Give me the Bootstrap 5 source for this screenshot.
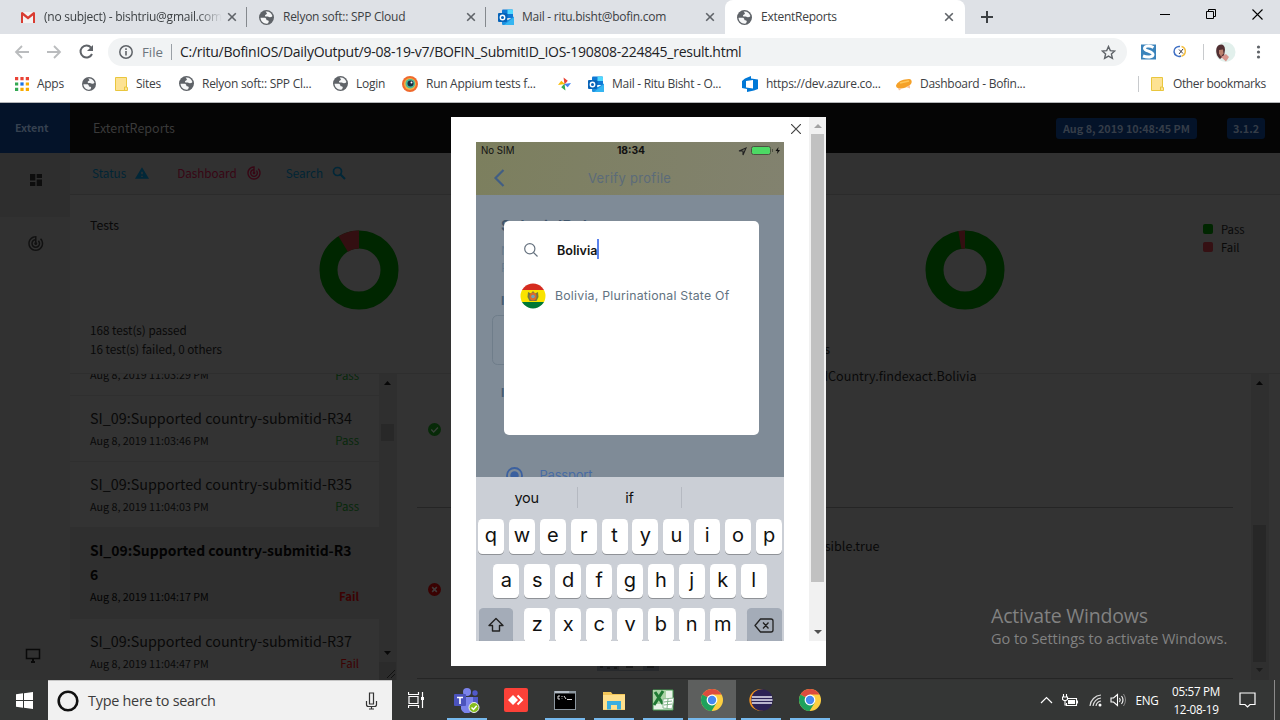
<!DOCTYPE html>
<html lang="en">
<head>
<meta charset="utf-8">
<title>ExtentReports</title>
<link rel="stylesheet" href="https://cdn.jsdelivr.net/npm/bootstrap@5.3.0/dist/css/bootstrap.min.css">
<style>
body{width:1280px;height:720px;overflow:hidden;font-family:"Open Sans","Noto Sans",sans-serif;font-size:12px;line-height:16px;color:#3c4043;background:#333}
svg{display:block;flex:none}
.desk{height:720px}
/* browser chrome */
.tabstrip{height:34px;background:#dee1e6;padding-left:8px}
.tab{width:239px;padding-left:12px;position:relative}
.tab .cap{width:179px;margin-left:8px;overflow:hidden;white-space:nowrap;letter-spacing:-.26px}
.tab .globe+.cap{margin-left:9px}
.tab.sep{border-right:1px solid #85898e;height:20px}
.tab .fade-cap{-webkit-mask-image:linear-gradient(90deg,#000 86%,transparent);mask-image:linear-gradient(90deg,#000 86%,transparent);width:178px;margin-right:1px}
.tab.cur{width:240px;height:34px;background:#fff;border-radius:8px 8px 0 0}
.winbtns{width:120px;height:28px;padding-right:17px}
.toolbar{height:36px;background:#fff;padding-left:14px}
.omni{width:1019px;height:28px;border-radius:14px;background:#f1f3f4;font-size:13.3px;padding:0 11px}
.omni .scheme{margin:0 8px 0 9px}
.omni .url{color:#202124;font-size:14px;letter-spacing:-.27px}
.omni .vr{height:16px;background:#9aa0a6;opacity:1;align-self:center}
.marks{height:33px;background:#fff;border-bottom:1px solid #b4b6b9;padding:0 0 5px 15px;letter-spacing:-.28px}
.marklist{display:grid;grid-template-columns:67px 33px 64px 154px 69px 156px 30px 154px 154px 160px;align-items:center}
.marklist>div,.other{display:flex;align-items:center;gap:8px;white-space:nowrap}
.other{width:129px;gap:9px;letter-spacing:-.38px}
/* report */
.report{height:577px;font-family:"Noto Sans CJK SC","Noto Sans CJK JP",sans-serif;color:#090909;position:relative;overflow:hidden}
.topbar{height:50px;background:#050505;color:#3a3a3a}
.brandbox{width:70px;height:50px;padding-left:15px;background:#041329;color:#364150;font-weight:700;font-size:10.7px}
.rname{font-size:12.5px;margin-left:23px}
.pill{background:#041329;color:#353d48;font-weight:700;border-radius:3px;height:21px;font-size:10.8px;line-height:21px;width:141px;text-align:center}
.pill.ver{width:38px;margin:0 15px 0 30px}
.rail{width:70px;height:527px;background:#313131;flex:none}
.rail .on{height:64px;background:#2e2e2e;padding:21px 0 0 2px}
.subnav{height:42px;background:#313131;border-bottom:1px solid #2b2b2b;padding:0 0 1px 22px;color:#012535;font-size:11.7px}
.subnav svg{margin:0 28px 0 9px}
.subnav .now{color:#380614}
.dash{height:179px;border-bottom:1px solid #2e2e2e;font-size:11.7px}
.dash .half{width:605px;flex:none;height:178px;position:relative}
.dash h6{font-size:12.3px;line-height:18px;font-weight:400;margin:0;padding:21px 0 0 20px}
.dash .donut{margin:-4px 0 0 249px}
.dash .half+.half .donut{margin-left:250px}
.tally{padding-left:20px;line-height:19px;margin-top:10px}
.legend{position:absolute;left:528px;top:25px;line-height:18px;width:60px;font-size:11.3px}
.sw{width:10px;height:10px;border-radius:2px}
.tests{width:309px}
.test{height:66px;border-bottom:1px solid #2f2f2f;padding:10px 20px 0;background:#333;overflow:hidden}
.test.cut{height:22px;padding:0 20px 11px}
.test.sel{height:91px;background:#2f2f2f;font-weight:700;color:#030303}
.test .ttl{font-size:14.35px;line-height:24px;margin-bottom:1px}
.test.sel .ttl{font-size:13.95px}
.test .when{font-size:10.75px;line-height:18px;font-weight:400;padding-top:1px}
.test .st{font-size:11.4px;line-height:18px}
.pass{color:#08280b}.fail{color:#3c0202}
.sbar{width:18px;background:#2f2f2f;flex:none}
.steps{width:854px;padding-left:20px}
.step{width:816px;border-bottom:1px solid #252525;font-size:12.6px;padding-left:10.5px}
.step .ico-pass{margin-top:49px}
.s1{margin-left:306px;width:230px;text-align:right;line-height:18px;margin-top:-7px}
.s2{margin-left:239px;width:200px;text-align:right;margin-top:-86px}
/* dialog */
.viewer{position:absolute;left:451px;top:14px;width:375px;height:549px;background:#fff}
.viewer .shut{height:25px;width:358px;padding:0 8px 2px 0}
.phone{width:308px;height:499px;margin-left:25px;font-family:Inter,Roboto,sans-serif;color:#111}
.phead{height:53px;background:linear-gradient(100deg,#7c7f5e,#82826f)}
.stat{height:17px;font-size:9.7px;line-height:17px;padding:0 3px 0 5px}
.stat span,.stat svg{width:43px}
.stat b{font-size:10.3px}
.nav2{height:36px;padding:2px 0 0 17px;color:#5b6b79;font-size:13px;letter-spacing:.3px}
.vp{margin-left:83px}
.pbody{height:282px;background:#7f8b97;position:relative;overflow:hidden;color:#445a70}
.picker{position:absolute;left:28px;top:26px;width:255px;height:214px;border-radius:5px;background:#fff;padding:20px 16px}
.q{font-size:12.6px;font-weight:600;color:#151515;margin-left:19px;line-height:17px;border-right:2px solid #5b82ec;padding:3px 0 0;height:20px;margin-top:-2px}
.ctry{margin-top:24px;gap:9px;color:#637381;font-size:12.3px;letter-spacing:.22px}
.keys{height:164px;background:#cbcfd6;overflow:hidden;color:#111}
.hint{height:42px;font-size:14.5px;letter-spacing:-.2px;padding-bottom:1px}
.hint span{width:102px;height:21px;line-height:21px;text-align:center}
.hint span+span{border-left:1px solid #b5b9c1;width:104px}
.krow{height:34.5px;margin-bottom:10px;gap:4.9px;font-size:20px;line-height:33px}
.k{width:26px;height:34.5px;border-radius:4.5px;background:#fff;text-align:center;box-shadow:0 1px 0 #8f9297}
.k.wide{width:34.5px;background:#a4acb8;display:flex;align-items:center;justify-content:center}
.k.shift{margin:0 auto 0 2.5px}.k.del{margin:0 2.5px 0 auto}
.vbar{position:absolute;right:0;top:0;width:17px;height:524px;background:#f1f1f1}
.vbar .th{width:13px;height:448px;background:#c1c1c1}
.peek{position:absolute;left:597px;top:563px}
.wm{position:absolute;left:991px;top:500px;font-family:"Open Sans",sans-serif;color:#828282;white-space:nowrap}
.wm .a{font-size:19.5px;line-height:25px;letter-spacing:-.2px}
.wm .b{font-size:14.5px;line-height:20px;letter-spacing:-.04px;margin-top:1px}
/* taskbar */
.tasks{height:40px;background:#343635;color:#fff}
.find{width:344px;height:40px;background:#f1f1f1;border-top:1px solid #c5c5c5;color:#3b3b3b;font-size:14.4px;letter-spacing:-.25px;padding:0 13px 0 8px}
.app{width:48px;height:40px;display:flex;align-items:center;justify-content:center}
.applist{gap:1px;margin-left:-1px}
.app.run{background:linear-gradient(#76b9ed,#76b9ed) center bottom/40px 2px no-repeat}
.app.act{background:linear-gradient(#76b9ed,#76b9ed) center bottom/48px 2px no-repeat #5d5f5e}
.tray{display:grid;grid-template-columns:24px 25px 24px 22px 36px 62px 40px 16px;justify-items:center;align-items:center;margin-left:auto;width:246px;font-size:11.7px;letter-spacing:-.3px}
.clock{line-height:18px;white-space:nowrap}
</style>
<script src="https://cdn.jsdelivr.net/npm/bootstrap@5.3.0/dist/js/bootstrap.bundle.min.js"></script>
</head>
<body>
<svg width="0" height="0" class="position-absolute">
 <symbol id="globe" viewBox="0 0 14 14"><circle cx="7" cy="7" r="7" fill="#5f6368"/><path d="M1.400 7.200h3.400c1.400 0 2 .6 2 1.500s.7 1 1.600 1c.7 0 .8.8.6 1.500l-.7 1.400C4.900 13.300 1.700 10.900 1.400 7.200z" fill="#f6f7f8"/><path d="M6.200 1.500c3-.5 5.600 1.300 6.300 4.200-.7 1.100-2 1.300-3 .9-1.200-.5-2.200-.2-3.200-.5-1.100-.4-.8-1.700.2-2 .8-.2 1.200-.7.700-1.300z" fill="#f6f7f8"/></symbol>
 <symbol id="x" viewBox="0 0 10 10"><path d="M1.200 1.200l7.600 7.600M8.800 1.200L1.200 8.800" stroke="#5f6368" stroke-width="1.600"/></symbol>
 <symbol id="outlook" viewBox="0 0 16 16"><path d="M4 1.500A1 1 0 0 1 5 .5h9a1 1 0 0 1 1 1V9H4z" fill="#0f78d4"/><path d="M9.500.5H14a1 1 0 0 1 1 1V5H9.500z" fill="#50d9ff"/><path d="M4 5h5.500v4.500H4z" fill="#0a5cad"/><path d="M4 8l6 3 6-3.500V15a1 1 0 0 1-1 1H5a1 1 0 0 1-1-1z" fill="#1a8fe0"/><path d="M16 8v7a1 1 0 0 1-1 1H6z" fill="#35b5f1"/><rect y="4" width="9" height="9" rx="1" fill="#0763b8"/><circle cx="4.500" cy="8.500" r="2.200" fill="none" stroke="#fff" stroke-width="1.400"/></symbol>
 <symbol id="folder" viewBox="0 0 13 14"><path d="M.5.500h11v10h1v3h-12z" fill="#fde293" stroke="#e9c63e"/><path d="M9.500 13v-3h2" fill="none" stroke="#e9c63e"/></symbol>
 <symbol id="chrome" viewBox="0 0 22 22"><circle cx="11" cy="11" r="11" fill="#fdcf41"/><path d="M11 11L1.470 5.500A11 11 0 0 1 20.530 5.500H11z" fill="#dd4b3e"/><path d="M1.470 5.500A11 11 0 0 0 10.600 22L15.800 13.500 11 11z" fill="#1fa15d"/><circle cx="11" cy="11" r="5.400" fill="#fff"/><circle cx="11" cy="11" r="4.200" fill="#4688f1"/></symbol>
 <symbol id="track" viewBox="0 0 24 24"><path d="M19.070 4.930l-1.410 1.410C19.100 7.790 20 9.790 20 12c0 4.420-3.580 8-8 8s-8-3.580-8-8c0-4.080 3.050-7.440 7-7.930v2.020C8.160 6.570 6 9.030 6 12c0 3.310 2.690 6 6 6s6-2.690 6-6c0-1.660-.67-3.160-1.760-4.240l-1.410 1.410C15.550 9.900 16 10.900 16 12c0 2.210-1.790 4-4 4s-4-1.790-4-4c0-1.860 1.280-3.410 3-3.860v2.140c-.6.350-1 .98-1 1.720 0 1.100.9 2 2 2s2-.9 2-2c0-.740-.4-1.380-1-1.720V2h-1C6.480 2 2 6.480 2 12s4.480 10 10 10 10-4.480 10-10c0-2.760-1.120-5.260-2.930-7.070z" fill="currentColor"/></symbol>
</svg>
<div class="desk d-flex flex-column">
 <header>
  <div class="tabstrip d-flex align-items-center">
   <div class="tab sep d-flex align-items-center"><svg width="16" height="13" viewBox="0 0 16 13"><path d="M1 1h14v11H1z" fill="#f2f2f2"/><path d="M1 1.500V12h2V4.500l5 4 5-4V12h2V1.500L13.500 1 8 5.500 2.500 1z" fill="#d93c32"/></svg><span class="cap fade-cap">(no subject) - bishtriu@gmail.com</span><svg class="ms-1" width="10" height="10"><use href="#x"/></svg></div>
   <div class="tab sep d-flex align-items-center"><svg class="globe" width="15" height="15"><use href="#globe"/></svg><span class="cap">Relyon soft:: SPP Cloud</span><svg class="ms-1" width="10" height="10"><use href="#x"/></svg></div>
   <div class="tab d-flex align-items-center"><svg width="16" height="16"><use href="#outlook"/></svg><span class="cap">Mail - ritu.bisht@bofin.com</span><svg class="ms-1" width="10" height="10"><use href="#x"/></svg></div>
   <div class="tab cur d-flex align-items-center"><svg class="globe" width="15" height="15"><use href="#globe"/></svg><span class="cap">ExtentReports</span><svg class="ms-1" width="10" height="10"><use href="#x"/></svg></div>
   <svg class="ms-3" width="12" height="12" viewBox="0 0 12 12"><path d="M6 0v12M0 6h12" stroke="#3c4043" stroke-width="2"/></svg>
   <div class="winbtns d-flex ms-auto justify-content-between align-items-center align-self-start"><svg width="10" height="10"><path d="M0 5.500h10" stroke="#000"/></svg><svg width="11" height="11"><path d="M.5 2.500h7v7h-7zM2.500 2.500v-2h7v7h-2" fill="none" stroke="#000"/></svg><svg width="11" height="11"><path d="M.5.500l10 10M10.500.500l-10 10" stroke="#000" stroke-width="1.100"/></svg></div>
  </div>
  <div class="toolbar d-flex align-items-center">
   <svg width="94" height="16" viewBox="0 0 94 16"><path d="M15 8H2M8 2L2 8l6 6M33 8h13M40 2l6 6-6 6" fill="none" stroke="#babcbe" stroke-width="1.800"/><path d="M77 3.500A6 6 0 1 0 78 10" fill="none" stroke="#5f6368" stroke-width="2"/><path d="M79 1v6h-6z" fill="#5f6368"/></svg>
   <div class="omni d-flex align-items-center"><svg width="14" height="14" viewBox="0 0 14 14"><circle cx="7" cy="7" r="6.200" fill="none" stroke="#5f6368" stroke-width="1.500"/><path d="M7 6v4.500M7 3.300v1.600" stroke="#5f6368" stroke-width="1.600"/></svg><span class="scheme text-secondary">File</span><span class="vr"></span><span class="url ms-2">C:/ritu/BofinIOS/DailyOutput/9-08-19-v7/BOFIN_SubmitID_IOS-190808-224845_result.html</span>
    <svg class="ms-auto" width="15" height="15" viewBox="0 0 15 15"><path d="M7.500 1.500l1.800 4.100 4.400.4-3.300 3 1 4.400-3.900-2.300-3.900 2.300 1-4.400L1.300 6l4.400-.4z" fill="none" stroke="#5f6368" stroke-width="1.400"/></svg></div>
   <svg class="ms-auto" width="139" height="20" viewBox="0 0 139 20"><path d="M0 2.500h15v15H0z" fill="#3a83bb"/><path d="M12.500 5.500C8 3 3.500 4 3.500 6.500S12 9.500 12 12.500 6 15.500 2 14" fill="none" stroke="#fff" stroke-width="3"/><path d="M39 4.500a5 5 0 1 0 1 9.500" fill="none" stroke="#3e6fc4" stroke-width="1.500"/><path d="M40.500 4.500a5 5 0 0 1 0 9.700" fill="none" stroke="#f3bd3c" stroke-width="1.500"/><path d="M38 7.500l4 4M42 7l-4 5" stroke="#334"/><path d="M62.500 2v16" stroke="#c8cacd"/><circle cx="84.500" cy="10" r="10" fill="#e2f0ec"/><path d="M76 5c3-4 8-3 8 3l-1 6-4 3c-3-2-5-8-3-12z" fill="#512f32"/><path d="M78 8l4-.5.500 4-2.500 3-2-3z" fill="#bb806d"/><path d="M80 15l5-3 3 3-3 4.500z" fill="#d8958c"/><g fill="#5f6368"><circle cx="117.500" cy="5" r="1.600"/><circle cx="117.500" cy="10" r="1.600"/><circle cx="117.500" cy="15" r="1.600"/></g></svg>
  </div>
  <div class="marks d-flex align-items-center">
   <div class="marklist">
    <div><svg width="14" height="14" viewBox="0 0 13 13"><g fill="#ea4335"><path d="M0 0h3v3H0zM5 0h3v3H5zM10 0h3v3h-3z"/></g><path d="M0 5h3v3H0zM0 10h3v3H0z" fill="#34a853"/><path d="M5 5h3v3H5z" fill="#1a73e8"/><path d="M10 5h3v3h-3zM5 10h3v3H5zM10 10h3v3h-3z" fill="#f9ab00"/></svg><span>Apps</span></div>
    <div><svg width="14" height="14"><use href="#globe"/></svg></div>
    <div><svg width="13" height="14"><use href="#folder"/></svg>Sites</div>
    <div><svg width="15" height="15"><use href="#globe"/></svg>Relyon soft:: SPP Cl...</div>
    <div><svg width="15" height="15"><use href="#globe"/></svg>Login</div>
    <div><svg width="16" height="16" viewBox="0 0 16 16"><circle cx="8" cy="8" r="8" fill="#ef6a2d"/><circle cx="8" cy="8" r="6" fill="#f4b042"/><circle cx="8.300" cy="7.700" r="4.800" fill="#49b89a"/><circle cx="8.500" cy="7.500" r="3" fill="#172d42"/><circle cx="9.500" cy="6.500" r="1" fill="#fff"/></svg>Run Appium tests f...</div>
    <div><svg width="13" height="14" viewBox="0 0 14 14"><path d="M7 7.500L6 0l4.500 3.500z" fill="#e94335"/><path d="M6.500 7l7.500-1-3.500 4.500z" fill="#4285f4"/><path d="M7 6.500L8 14l-4.500-3.500z" fill="#34a853"/><path d="M7.500 7L0 8l3.500-4.500z" fill="#fbbc05"/></svg></div>
    <div><svg width="16" height="16"><use href="#outlook"/></svg>Mail - Ritu Bisht - O...</div>
    <div><svg width="16" height="16" viewBox="0 0 16 16"><path d="M0 5l3-2.500L9 0v2.500l7 1V13l-4 1.500-7 1.500V13L0 12zM4 5v6.500l7 1V4z" fill="#0078d7" fill-rule="evenodd"/></svg>https://dev.azure.co...</div>
    <div><svg width="16" height="14" viewBox="0 0 16 14"><path d="M0 8.500C1 5.500 5 3 9 2.500l4-.5c3 0 3.500 3.500 1.500 5.500-3 3-8 4.500-11.500 4C1 11.200 0 10 0 8.500z" fill="#f5a128"/><path d="M2 11l1 2.500 3-2zM10 10l4 1.500V8z" fill="#f9c39a"/><path d="M4 6l9-2" stroke="#ffc65a" stroke-width="1.500"/></svg>Dashboard - Bofin...</div>
   </div>
   <svg class="ms-auto me-2" width="5" height="16"><path d="M.5 0v16" stroke="#c8cacd"/></svg>
   <div class="other"><svg width="13" height="14"><use href="#folder"/></svg>Other bookmarks</div>
  </div>
 </header>

 <main class="report">
  <div class="topbar d-flex align-items-center">
   <div class="brandbox d-flex align-items-center">Extent</div>
   <span class="rname">ExtentReports</span>
   <span class="pill ms-auto">Aug 8, 2019 10:48:45 PM</span>
   <span class="pill ver">3.1.2</span>
  </div>
  <div class="d-flex">
   <nav class="rail d-flex flex-column">
    <div class="on d-flex justify-content-center"><svg width="12" height="12" viewBox="0 0 12 12"><path d="M0 0h5.300v6.500H0zM0 8h5.300v4H0zM6.700 0H12v4H6.700zM6.700 5.500H12V12H6.700z" fill="#0d0d0d"/></svg></div>
    <svg class="mx-auto mt-3" width="18" height="21" viewBox="-3 0 24 24" color="#111"><use href="#track" width="24" height="24" x="-2"/></svg>
    <svg class="mt-auto mb-3" width="66" height="16" viewBox="0 0 66 16"><path d="M26.500 1.500h13v9h-13z" fill="none" stroke="#090909" stroke-width="1.500"/><path d="M31 14h4M33 11v3" stroke="#090909" stroke-width="2"/></svg>
   </nav>
   <section class="flex-grow-1">
    <div class="subnav d-flex align-items-center">
     <span>Status</span><svg width="14" height="12" viewBox="0 0 16 13"><path d="M8 0l8 13H0z" fill="#012738"/><path d="M8 5v3M8 9.500V11" stroke="#333" stroke-width="1.500"/></svg>
     <span class="now">Dashboard</span><svg width="16" height="16" class="now me-4"><use href="#track"/></svg>
     <span>Search</span><svg width="14" height="14" viewBox="0 0 14 14"><circle cx="5.500" cy="5.500" r="4" fill="none" stroke="#012738" stroke-width="1.700"/><path d="M8.500 8.500l4.500 4.500" stroke="#012738" stroke-width="2"/></svg>
    </div>
    <div class="dash d-flex">
     <div class="half"><h6>Tests</h6><svg class="donut" width="80" height="80" viewBox="0 0 80 80"><circle cx="40" cy="40" r="30.500" fill="none" stroke="#002600" stroke-width="18"/><circle cx="40" cy="40" r="30.500" fill="none" stroke="#330f11" stroke-width="18" pathLength="184" stroke-dasharray="16 168" stroke-dashoffset="16" transform="rotate(-90 40 40)"/></svg><div class="tally"><div>168 test(s) passed</div><div>16 test(s) failed, 0 others</div></div></div>
     <div class="half"><h6>Steps</h6><svg class="donut" width="80" height="80" viewBox="0 0 80 80"><circle cx="40" cy="40" r="30.500" fill="none" stroke="#002600" stroke-width="18"/><circle cx="40" cy="40" r="30.500" fill="none" stroke="#330f11" stroke-width="18" pathLength="184" stroke-dasharray="5 179" stroke-dashoffset="5" transform="rotate(-90 40 40)"/></svg><div class="tally"><div>&nbsp;</div><div>17 step(s) failed, 0 others</div></div>
      <div class="legend"><div class="d-flex align-items-center gap-2"><span class="sw" style="background:#002600"></span>Pass</div><div class="d-flex align-items-center gap-2"><span class="sw" style="background:#351013"></span>Fail</div></div></div>
    </div>
    <div class="d-flex" style="height:306px">
     <div class="tests overflow-hidden flex-shrink-0">
      <div class="test cut d-flex justify-content-between align-items-end"><span class="when">Aug 8, 2019 11:03:29 PM</span><span class="st pass">Pass</span></div>
      <div class="test"><div class="ttl">SI_09:Supported country-submitid-R34</div><div class="d-flex justify-content-between"><span class="when">Aug 8, 2019 11:03:46 PM</span><span class="st pass">Pass</span></div></div>
      <div class="test"><div class="ttl">SI_09:Supported country-submitid-R35</div><div class="d-flex justify-content-between"><span class="when">Aug 8, 2019 11:04:03 PM</span><span class="st pass">Pass</span></div></div>
      <div class="test sel"><div class="ttl">SI_09:Supported country-submitid-R3<br>6</div><div class="d-flex justify-content-between"><span class="when">Aug 8, 2019 11:04:17 PM</span><span class="st fail">Fail</span></div></div>
      <div class="test"><div class="ttl">SI_09:Supported country-submitid-R37</div><div class="d-flex justify-content-between"><span class="when">Aug 8, 2019 11:04:47 PM</span><span class="st fail">Fail</span></div></div>
     </div>
     <div class="sbar"><svg width="18" height="306" viewBox="0 0 18 306"><path d="M5 11l3.500-4 3.500 4zM5 277l3.500 4 3.500-4z" fill="#080808"/><path d="M2 50h13v17H2z" fill="#282828"/><path d="M0 288h17v18H0z" fill="#2b2b2b"/><path d="M8 304l8-8M12 304l4-4" stroke="#111"/></svg></div>
     <div class="steps flex-shrink-0">
      <div class="step d-flex align-items-start" style="height:134px"><svg class="ico-pass" width="13" height="13" viewBox="0 0 14 14"><circle cx="7" cy="7" r="7" fill="#072a08"/><path d="M3.500 7l2.600 2.600 4.600-4.800" fill="none" stroke="#3a403a" stroke-width="1.500"/></svg><span class="s1">SupportedCountry.findexact.Bolivia</span></div>
      <div class="step d-flex align-items-center pb-2" style="height:171px"><svg width="13" height="13" viewBox="0 0 14 14"><circle cx="7" cy="7" r="7" fill="#3a0202"/><path d="M4.500 4.500l5 5M9.500 4.500l-5 5" stroke="#403a3a" stroke-width="1.700"/></svg><span class="s2">isVisible.true</span></div>
     </div>
     <div class="sbar"><svg width="17" height="306" viewBox="0 0 17 306"><path d="M5 11l3.500-4 3.500 4z" fill="#080808"/><path d="M5 294l3.500 4 3.500-4z" fill="#1c1c1c"/><path d="M2 151h13v137H2z" fill="#272727"/></svg></div>
    </div>
   </section>
  </div>

  <div class="viewer">
   <div class="shut d-flex align-items-center justify-content-end"><svg width="10" height="10"><path d="M0 0l10 10M10 0L0 10" stroke="#444" stroke-width="1.200"/></svg></div>
   <div class="phone">
    <div class="phead">
     <div class="stat d-flex justify-content-between align-items-center"><span>No SIM</span><b>18:34</b><svg width="43" height="10" viewBox="0 0 43 10"><path d="M1 5l7-3-3 7V5z" fill="none" stroke="#222" stroke-width="1.100"/><rect x="13.500" y=".5" width="19" height="8" rx="2" fill="#4cd964" stroke="#4e5242"/><path d="M34.500 3v3" stroke="#4e5242"/><path d="M40.500 1L37.500 5h2l-.5 3 3-4h-2z" fill="#111"/></svg></div>
     <div class="nav2 d-flex align-items-center"><svg width="12" height="18" viewBox="0 0 12 18"><path d="M10.500 1L2.500 9l8 8" fill="none" stroke="#415e84" stroke-width="2.200"/></svg><span class="vp">Verify profile</span></div>
    </div>
    <div class="pbody">
     <svg width="308" height="282" viewBox="0 0 308 282" font-family="Inter,Roboto,sans-serif"><text x="25" y="36" font-size="14.500" font-weight="700" fill="#40566c" textLength="152">Submit ID document</text><text x="25" y="60" font-size="12" fill="#66798b">N</text><text x="25" y="77" font-size="12" fill="#66798b">P</text><text x="25" y="110" font-size="12" font-weight="700" fill="#455c73">I</text><rect x="16.500" y="120.500" width="60" height="49" rx="5" fill="none" stroke="#6f7d8a"/><text x="25" y="202" font-size="12" font-weight="700" fill="#455c73">I</text><circle cx="38.500" cy="280.500" r="7.500" fill="none" stroke="#3b609f" stroke-width="1.800"/><circle cx="38.500" cy="280.500" r="4.200" fill="#3b609f"/><text x="63.500" y="285" font-size="13" fill="#486ca4" textLength="53">Passport</text></svg>
     <div class="picker"><div class="d-flex align-items-center"><svg class="ms-1" width="14" height="14" viewBox="0 0 14 14"><circle cx="5.800" cy="5.800" r="5.100" fill="none" stroke="#66727f" stroke-width="1.200"/><path d="M9.500 9.500l4 4" stroke="#66727f" stroke-width="1.200"/></svg><span class="q">Bolivia</span></div>
      <div class="ctry d-flex align-items-center"><svg width="26" height="26" viewBox="0 0 26 26"><clipPath id="rnd"><circle cx="13" cy="13" r="12.500"/></clipPath><g clip-path="url(#rnd)"><path d="M0 0h26v7H0z" fill="#d52b1e"/><path d="M0 7h26v12H0z" fill="#f9e300"/><path d="M0 19h26v7H0z" fill="#007934"/></g><path d="M8 9l3 1.500 2-2.500 2 2.500L18 9l.5 5-2 4h-7l-2-4z" fill="#71793f"/><ellipse cx="13" cy="13.500" rx="3.500" ry="4" fill="#da6b2c"/><circle cx="13" cy="13.500" r="1.800" fill="#6ba6bd"/></svg><span>Bolivia, Plurinational State Of</span></div></div>
    </div>
    <div class="keys">
     <div class="hint d-flex align-items-center"><span>you</span><span>if</span><span></span></div>
     <div class="krow d-flex justify-content-center"><div class="k">q</div><div class="k">w</div><div class="k">e</div><div class="k">r</div><div class="k">t</div><div class="k">y</div><div class="k">u</div><div class="k">i</div><div class="k">o</div><div class="k">p</div></div>
     <div class="krow d-flex justify-content-center"><div class="k">a</div><div class="k">s</div><div class="k">d</div><div class="k">f</div><div class="k">g</div><div class="k">h</div><div class="k">j</div><div class="k">k</div><div class="k">l</div></div>
     <div class="krow d-flex justify-content-center"><div class="k wide shift"><svg width="18" height="16" viewBox="0 0 18 16"><path d="M9 1.500l7 7h-3.500V14h-7V8.500H2z" fill="none" stroke="#222" stroke-width="1.400" stroke-linejoin="round"/></svg></div><div class="k">z</div><div class="k">x</div><div class="k">c</div><div class="k">v</div><div class="k">b</div><div class="k">n</div><div class="k">m</div><div class="k wide del"><svg width="20" height="15" viewBox="0 0 20 15"><path d="M6.500 1H17a2 2 0 0 1 2 2v9a2 2 0 0 1-2 2H6.500L1 7.500zM9 4.500l5.500 6M14.500 4.500l-5.500 6" fill="none" stroke="#222" stroke-width="1.300" stroke-linejoin="round"/></svg></div></div>
    </div>
   </div>
   <div class="vbar d-flex flex-column align-items-center"><svg width="8" height="17" viewBox="0 0 8 17"><path d="M0 11l4-4 4 4z" fill="#a3a3a3"/></svg><div class="th"></div><svg class="mt-auto" width="8" height="17" viewBox="0 0 8 17"><path d="M0 6l4 4 4-4z" fill="#505050"/></svg></div>
  </div>
  <svg class="peek" width="62" height="5" viewBox="0 0 62 5"><path d="M0 0h62v5H0z" fill="#26282b"/><path d="M22 0h24v4H22z" fill="#313131"/><path d="M3 1h3M10 2h3M17 2h3M29 1h7M50 1h7" stroke="#151515" stroke-width="1.500"/></svg>
  <div class="wm"><div class="a">Activate Windows</div><div class="b">Go to Settings to activate Windows.</div></div>
 </main>

 <footer class="tasks d-flex align-items-center">
  <div class="app"><svg width="17" height="17" viewBox="0 0 17 17"><path d="M0 2.300l7-1V8H0zM8 1.200L17 0v8H8zM0 9h7v6.700l-7-1zM8 9h9v8l-9-1.200z" fill="#fff"/></svg></div>
  <div class="find d-flex align-items-center"><svg width="24" height="24" viewBox="0 0 24 24"><circle cx="12" cy="12" r="9.300" fill="none" stroke="#111" stroke-width="2.600"/></svg><span class="ms-2">Type here to search</span><svg class="ms-auto" width="14" height="18" viewBox="0 0 14 18"><path d="M4.500 1h4v11h-4zM1.500 9v3.500q0 2 2 2h6q2 0 2-2V9M6.500 14.500V17M4 17h5" fill="none" stroke="#333" stroke-width="1.200"/></svg></div>
  <div class="app me-1"><svg width="17" height="16" viewBox="0 0 17 16"><path d="M.5 0v2.500h10V0M.5 16v-2.500h10V16M1 4.500h9v7H1zM14.500 0v16" fill="none" stroke="#fff" stroke-width="1.200"/><path d="M13 5h3v3h-3z" fill="#fff"/></svg></div>
  <div class="applist d-flex">
   <div class="app run"><svg width="26" height="25" viewBox="0 0 26 25"><circle cx="13" cy="4" r="4" fill="#7b83eb"/><circle cx="21" cy="5" r="2.700" fill="#5059c9"/><path d="M17 9h7v8a5 5 0 0 1-5 5z" fill="#5059c9"/><path d="M7 9h12v8a6 6 0 0 1-12 4z" fill="#7b83eb"/><rect y="6" width="12" height="12" rx="1" fill="#4b53bc"/><path d="M3 9.500h6M6 9.500V16" stroke="#fff" stroke-width="1.600"/><circle cx="20" cy="19.500" r="5" fill="#85bd1e" stroke="#eee"/><path d="M17.500 19.500l2 2 3.200-3.800" fill="none" stroke="#fff" stroke-width="1.500"/></svg></div>
   <div class="app"><svg width="24" height="24" viewBox="0 0 24 24"><rect width="24" height="24" rx="2" fill="#fc4138"/><path d="M9 7l5 5-5 5-5-5z" fill="#fff"/><path d="M13.500 7.500L18 12l-4.500 4.500" fill="none" stroke="#fff" stroke-width="2"/></svg></div>
   <div class="app run"><svg width="22" height="19" viewBox="0 0 22 19"><path d="M0 0h22v19H0z" fill="#8d98a0"/><path d="M1 2.500h20V18H1z" fill="#000"/><path d="M1 1h14" stroke="#dce3ec"/><path d="M6 5H4v3h2M8 5v1M8 7.500V8M10 5l2 3M13 8.500h5" fill="none" stroke="#ddd"/></svg></div>
   <div class="app run"><svg width="22" height="19" viewBox="0 0 22 19"><path d="M0 1h8l1.500 2H22v16H0z" fill="#f3c658"/><path d="M0 4h22v14.500H0z" fill="#ffe08c"/><path d="M4 18.500V10h14v8.500h-4V14H8v4.500z" fill="#3aaee0"/></svg></div>
   <div class="app run"><svg width="22" height="22" viewBox="0 0 22 22"><path d="M1 1h20v20H1z" fill="#e9f4e9" stroke="#459a50"/><path d="M1 1h13v14H1z" fill="#a9d3a5"/><path d="M3 3l8 12M11 2L2 16" stroke="#1f7a33" stroke-width="3"/><path d="M11 10l11-1-2 11-9-1z" fill="#fff" stroke="#89b991"/><path d="M12 13l8-1M12 16l8-1M16 10l-1 9" stroke="#7eb287"/></svg></div>
   <div class="app act"><svg width="22" height="22"><use href="#chrome"/></svg></div>
   <div class="app run"><svg width="24" height="24" viewBox="0 0 24 24"><circle cx="11" cy="12" r="10.700" fill="#f7941e"/><circle cx="13" cy="12" r="10.800" fill="#2c2255"/><path d="M3 9h20M2.500 12h21M3 15h20" stroke="#e8e6f4" stroke-width="1.600"/></svg></div>
   <div class="app run"><svg width="22" height="22"><use href="#chrome"/></svg></div>
  </div>
  <div class="tray"><svg width="13" height="8" viewBox="0 0 13 8"><path d="M1 7l5.500-5.500L12 7" fill="none" stroke="#fff" stroke-width="1.200"/></svg>
   <svg width="17" height="13" viewBox="0 0 17 13"><path d="M5.500 4.500h9v7h-10V9M15.500 6.500v3M1.500 0v3M4.500 0v3M.5 3h5v2.500l-1.500 1H2l-1.500-1zM3 7v4h1.500" fill="none" stroke="#fff" stroke-width="1.100"/><path d="M6 6h7v4H6z" fill="#fff"/></svg>
   <svg width="13" height="14" viewBox="0 0 13 14"><path d="M1 13A12 12 0 0 1 12 2M4 13a9 9 0 0 1 8-8M7 13a6 6 0 0 1 5-5" fill="none" stroke="#ddd" stroke-width="1.200"/><circle cx="11" cy="12" r="1.500" fill="#fff"/></svg>
   <svg width="17" height="14" viewBox="0 0 17 14"><path d="M1 5h2.500l4-3.500v11L3.500 9H1zM9.500 5q1.500 2 0 4M11.500 3q3 4 0 8" fill="none" stroke="#fff" stroke-width="1.100"/><path d="M13.500 1q4 6 0 12" fill="none" stroke="#888"/></svg>
   <span>ENG</span><div class="clock text-center">05:57 PM<br>12-08-19</div>
   <svg width="17" height="16" viewBox="0 0 17 16"><path d="M1 1h15v11.500h-5L8.500 15 6 12.500H1z" fill="none" stroke="#fff" stroke-width="1.200"/></svg><svg width="2" height="40"><path d="M.5 0v40" stroke="#8b8b8b"/></svg></div>
 </footer>
</div>
</body>
</html>
